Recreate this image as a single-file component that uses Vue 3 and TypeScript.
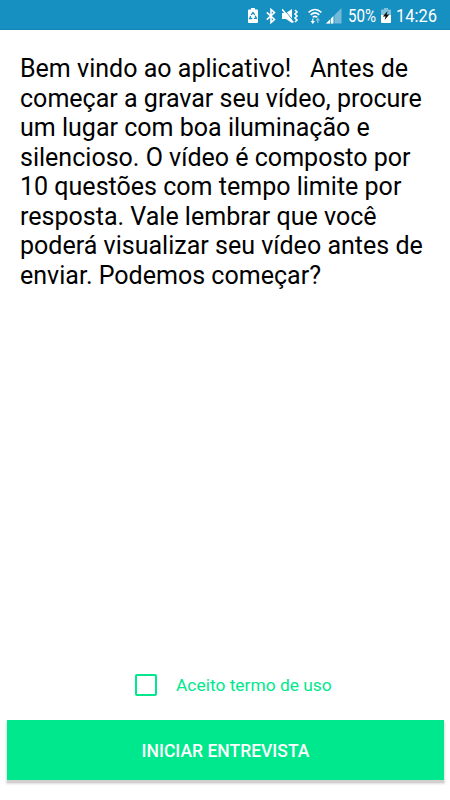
<script setup lang="ts">
import { ref } from 'vue'

const accepted = ref(false)
const lines: string[] = [
  'Bem vindo ao aplicativo!\u00a0\u00a0 Antes de',
  'começar a gravar seu vídeo, procure',
  'um lugar com boa iluminação e',
  'silencioso. O vídeo é composto por',
  '10 questões com tempo limite por',
  'resposta. Vale lembrar que você',
  'poderá visualizar seu vídeo antes de',
  'enviar. Podemos começar?',
]
</script>

<template>
  <main class="screen">
    <header class="status">
      <svg class="recycle" width="10" height="15" viewBox="0 0 10 15">
        <path d="M3 0h4v1.5h2q1 0 1 1V14q0 1-1 1H1q-1 0-1-1V2.5q0-1 1-1h2z" fill="#fff" />
        <path d="M3.2 6.8 5 4.5l1.7 2.3M7.3 7.8l1.1 2.6H6M4.3 10.5H1.6l1.1-2.6" fill="none" stroke="#168fc1" stroke-width="1.3" />
      </svg>
      <svg class="bluetooth" width="10" height="16" viewBox="0 0 10 16">
        <path d="M.8 4.4 8.5 11.4 5 14.5V1.5l3.5 3.1L.8 11.6" fill="none" stroke="#fff" stroke-width="1.6" />
      </svg>
      <svg class="mute" width="17" height="16" viewBox="0 0 17 16">
        <path d="M0 5h4l6-4v14l-6-4H0z" fill="#fff" />
        <path d="M1 .5 12 13.5" stroke="#168fc1" stroke-width="1" />
        <path d="M0 1.3 11.3 14.5" stroke="#fff" stroke-width="1.6" />
        <path d="m13 2 2 2-2 2 2 2-2 2 2 2-2 2" fill="none" stroke="#fff" stroke-width="1.6" />
      </svg>
      <svg class="wifi" width="14" height="16" viewBox="0 0 14 16">
        <path d="M.6 4.3Q7-1.3 13.4 4.3M2.7 6.8Q7 3.1 11.3 6.8M4.8 9.2Q7 7.4 9.2 9.2" fill="none" stroke="#fff" stroke-width="1.6" />
        <path d="M4.8 10.5v4M3.2 13l1.6 2 1.6-2" fill="none" stroke="#fff" stroke-width="1.1" />
        <path d="M9.8 15v-4M8.2 12.5l1.6-2 1.6 2" fill="none" stroke="#8bc7e0" stroke-width="1.2" />
      </svg>
      <svg class="signal" width="16" height="16" viewBox="0 0 16 16">
        <path d="M0 15.5 15.5 0v15.5z" fill="#73bad9" />
        <path d="M0 15.5 7.5 8v7.5z" fill="#fff" />
        <path d="M4.5 9v7M8 5v11" stroke="#168fc1" stroke-width=".7" />
      </svg>
      <span class="percent"><span>50%</span></span>
      <svg class="charging" width="10" height="15" viewBox="0 0 10 15">
        <path d="M3 0h4v1.5h2q1 0 1 1V8H0V2.5q0-1 1-1h2z" fill="#80c1dc" />
        <path d="M0 7h10v7q0 1-1 1H1q-1 0-1-1z" fill="#fff" />
        <path d="M6.6 3 1.8 8.4h2.7L3.7 12 8.3 6.6H5.6z" fill="#111" />
      </svg>
      <span class="clock"><span>14:26</span></span>
    </header>
    <p class="intro">
      <span v-for="line in lines" :key="line">{{ line }}</span>
    </p>
    <label class="terms">
      <input v-model="accepted" type="checkbox" />
      <span>Aceito termo de uso</span>
    </label>
    <button class="start" type="button">INICIAR ENTREVISTA</button>
  </main>
</template>

<style>
body { background: #fff; }
</style>

<style scoped>
.screen {
  display: flex;
  flex-direction: column;
  width: 450px;
  height: 800px;
  overflow: hidden;
  background: #fff;
  font-family: Roboto, "Liberation Sans", sans-serif;
}
.status {
  display: flex;
  align-items: center;
  box-sizing: border-box;
  height: 30px;
  flex: none;
  padding: 2px 0 0 248px;
  background: #168fc1;
  border-bottom: 1px solid #1285b6;
  color: #fff;
  font-size: 18.7px;
  line-height: 24px;
}
.status > * { flex: none; }
.bluetooth { margin-left: 8px; }
.mute { margin-left: 6px; }
.wifi { margin-left: 9px; }
.signal { margin-left: 4px; }
.percent { width: 30px; margin-left: 6px; }
.charging { margin-left: 3px; }
.clock { width: 42px; margin-left: 5px; }
.percent span,
.clock span {
  display: inline-block;
  transform: scaleX(.81);
  transform-origin: left center;
}
.clock span { transform: scaleX(.88); }
.intro {
  display: flex;
  flex-direction: column;
  margin: 24px 0 0 20px;
  color: #000;
  font-size: 25.04px;
  line-height: 29.54px;
  white-space: nowrap;
}
.terms {
  display: flex;
  align-items: center;
  gap: 19px;
  height: 24px;
  margin: auto 0 23px 135px;
  color: #00e88d;
  font-size: 17.4px;
}
.terms input {
  appearance: none;
  box-sizing: border-box;
  width: 22px;
  height: 22px;
  margin: 0;
  border: 2px solid #00e88d;
  border-radius: 2px;
}
.terms input:checked { background: #00e88d; }
.start {
  flex: none;
  width: 437px;
  height: 60px;
  margin: 0 0 20px 7px;
  padding: 2px 0 0;
  border: 0;
  background: #00e88d;
  box-shadow: 0 3px 0 #d3cfd0, 0 3px 2px 1px #ddd;
  color: #fff;
  font-family: inherit;
  font-size: 17.5px;
  font-weight: 500;
}
</style>
